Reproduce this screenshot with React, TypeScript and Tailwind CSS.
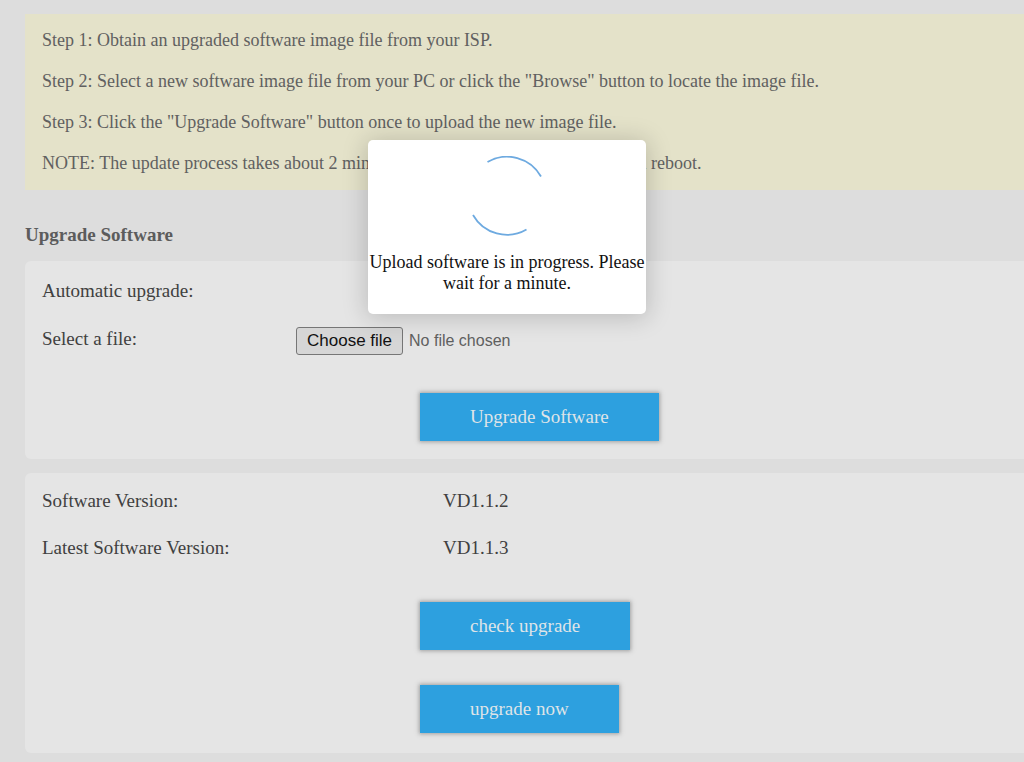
import { useState, type ChangeEvent, type FC, type ReactElement, type ReactNode } from "react";

const steps = [
  "Step 1: Obtain an upgraded software image file from your ISP.",
  'Step 2: Select a new software image file from your PC or click the "Browse" button to locate the image file.',
  'Step 3: Click the "Upgrade Software" button once to upload the new image file.',
  "NOTE: The update process takes about 2 minutes to complete, and your Router will reboot.",
];

const versions = [
  { label: "Software Version:", value: "VD1.1.2" },
  { label: "Latest Software Version:", value: "VD1.1.3" },
];

const ActionButton: FC<{ children: ReactNode }> = ({ children }): ReactElement => (
  <button
    type="button"
    className="h-12 px-[50px] bg-[#2da0df] text-[19px] text-[#dfe4e8] whitespace-nowrap shadow-[0_0_4px_1px_rgba(90,90,90,0.5)]"
  >
    {children}
  </button>
);

const FilePicker: FC = (): ReactElement => {
  const [fileName, setFileName] = useState<string>("No file chosen");

  const onChange = (e: ChangeEvent<HTMLInputElement>) => {
    setFileName(e.target.files?.[0]?.name ?? "No file chosen");
  };

  return (
    <label
      htmlFor="image-file"
      className="relative flex h-13 items-center gap-[6px] font-['Liberation_Sans',sans-serif] cursor-pointer"
    >
      <input id="image-file" type="file" onChange={onChange} className="sr-only" />
      <span className="flex h-7 items-center rounded-[3px] border border-[#767676] bg-[#d6d6d6] px-[10px] text-[17px] text-[#111]">
        Choose file
      </span>
      <span className="text-[16px] text-[#606060]">{fileName}</span>
    </label>
  );
};

const ProgressDialog: FC = (): ReactElement => (
  <div className="absolute inset-x-0 top-0 flex justify-center pt-[140px] pr-[10px]">
    <div
      role="alertdialog"
      aria-labelledby="progress-text"
      className="flex h-[174px] w-[278px] flex-col items-center rounded-[5px] bg-white pt-4 shadow-[0_2px_24px_2px_rgba(0,0,0,0.18)]"
    >
      <svg className="h-20 w-20" viewBox="0 0 80 80" fill="none" stroke="#6eaae0" strokeWidth="1.8">
        <path d="M20.5 6 A39 39 0 0 1 74 20.5" />
        <path d="M6 59 A39 39 0 0 0 59.5 73.5" />
      </svg>
      <p id="progress-text" className="-mx-2 mt-4 text-center text-[18px] leading-[21px] text-[#111]">
        Upload software is in progress. Please
        <br />
        wait for a minute.
      </p>
    </div>
  </div>
);

export default function App() {
  return (
    <div className="relative min-h-screen overflow-hidden bg-[#dddddd] pt-[14px] pb-[9px] pl-[25px] font-['Liberation_Serif',serif] text-[#404040]">
      <section className="flex flex-col gap-5 bg-[#e4e2c9] px-[17px] py-4 text-[18px] leading-[21px] text-[#606060]">
        {steps.map((step) => (
          <p key={step}>{step}</p>
        ))}
      </section>

      <h1 className="mt-[33px] text-[19px] leading-6 font-bold text-[#5c5c5c]">Upgrade Software</h1>

      <section className="mt-[14px] rounded-l-[6px] bg-[#e5e5e5] px-[17px] pt-[6px] pb-[18px] text-[19px]">
        <div className="leading-12">Automatic upgrade:</div>
        <div className="flex items-start">
          <label htmlFor="image-file" className="w-[254px] leading-12">
            Select a file:
          </label>
          <FilePicker />
        </div>
        <div className="mt-[26px] pl-[378px]">
          <ActionButton>Upgrade Software</ActionButton>
        </div>
      </section>

      <section className="mt-[14px] rounded-l-[6px] bg-[#e5e5e5] px-[17px] pt-1 pb-5 text-[19px]">
        <dl>
          {versions.map(({ label, value }) => (
            <div key={label} className="flex leading-[47px]">
              <dt className="w-[401px]">{label}</dt>
              <dd>{value}</dd>
            </div>
          ))}
        </dl>
        <div className="mt-[31px] flex flex-col items-start gap-[35px] pl-[378px]">
          <ActionButton>check upgrade</ActionButton>
          <ActionButton>upgrade now</ActionButton>
        </div>
      </section>

      <ProgressDialog />
    </div>
  );
}
